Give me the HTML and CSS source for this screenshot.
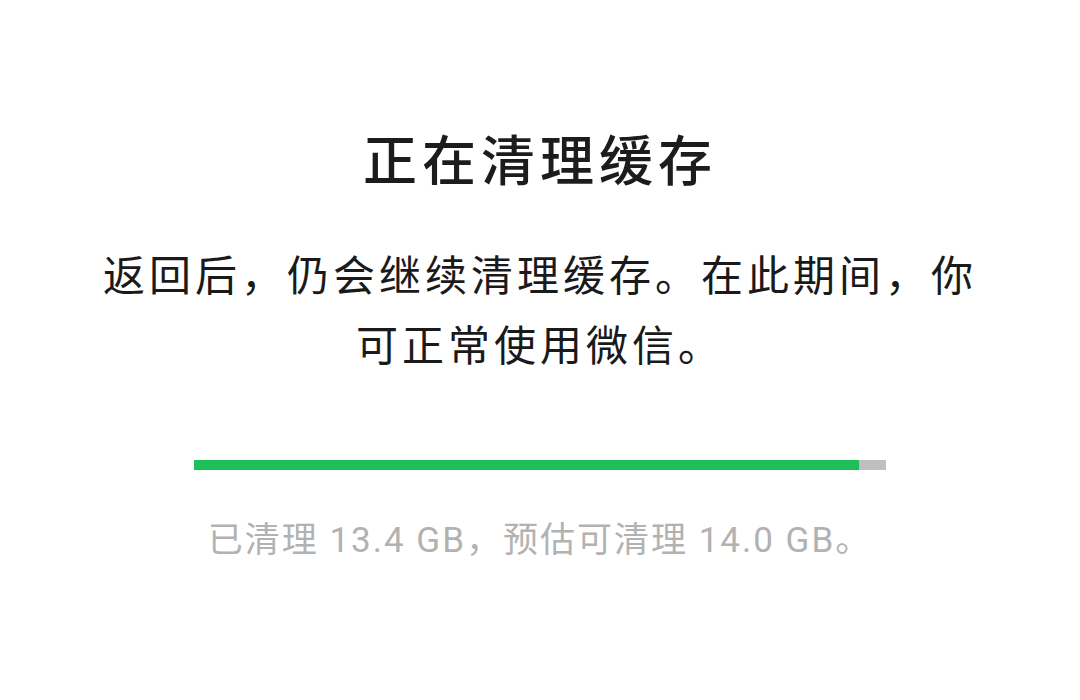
FILE: index.html
```html
<!DOCTYPE html>
<html lang="zh-CN">
<head>
<meta charset="utf-8">
<title>正在清理缓存</title>
<link rel="stylesheet" href="styles.css">
</head>
<body>
<main class="page">
  <h1 class="title">正在清理缓存</h1>
  <p class="desc">返回后，仍会继续清理缓存。在此期间，你可正常使用微信。</p>
  <div class="progress"><div class="progress-fill" style="width: 96.1%"></div></div>
  <p class="caption">已清理 13.4 GB，预估可清理 14.0 GB。</p>
</main>
</body>
</html>
```
FILE: styles.css
```css
html, body {
  margin: 0;
  padding: 0;
  background: #ffffff;
}
body {
  font-family: Roboto, "Noto Sans CJK SC", "Noto Sans", sans-serif;
  color: #1a1a1a;
}
.page {
  width: 1080px;
  height: 700px;
  box-sizing: border-box;
  padding-top: 128px;
  display: flex;
  flex-direction: column;
  align-items: center;
}
.title {
  margin: 0;
  font-size: 54px;
  line-height: 70px;
  font-weight: 500;
  letter-spacing: 5px;
  color: #1c1c1c;
  text-align: center;
}
.desc {
  margin: 44px 0 0;
  width: 900px;
  font-size: 42px;
  line-height: 70px;
  letter-spacing: 4px;
  font-weight: 400;
  color: #1a1a1a;
  text-align: center;
}
.progress {
  margin-top: 78px;
  width: 692px;
  height: 10px;
  background: #bfbfbf;
  display: flex;
}
.progress-fill {
  height: 100%;
  background: #1ebf5b;
}
.caption {
  margin: 46px 0 0;
  font-size: 35px;
  line-height: 50px;
  letter-spacing: 2px;
  color: #b2b2b2;
  text-align: center;
}
```
